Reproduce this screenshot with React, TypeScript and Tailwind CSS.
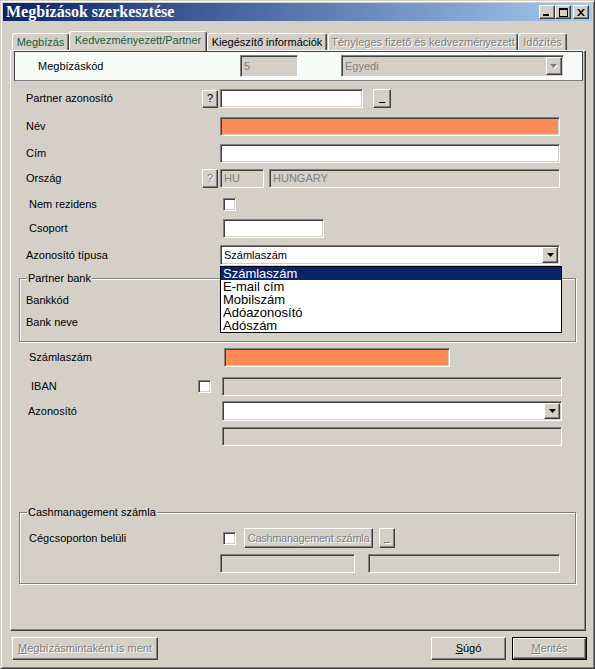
import React from "react";

const sunken =
  "border border-t-[#808080] border-l-[#808080] border-b-white border-r-white shadow-[inset_1px_1px_0_#404040,inset_-1px_-1px_0_#d4d0c8]";
const raised =
  "border border-t-white border-l-white border-b-[#404040] border-r-[#404040] shadow-[inset_-1px_-1px_0_#808080] bg-[#d4d0c8]";
const dim = "text-[#808080] [text-shadow:1px_1px_0_#fff]";

type Tone = "white" | "orange" | "gray";

function Input({ className = "", tone = "white", children }: { className?: string; tone?: Tone; children?: React.ReactNode }) {
  const bg = tone === "orange" ? "bg-[#ff8c55]" : tone === "gray" ? "bg-[#d4d0c8] text-[#808080]" : "bg-white";
  return (
    <div className={`${sunken} ${bg} h-[19px] flex items-center pl-[3px] overflow-hidden whitespace-nowrap ${className}`}>
      {children}
    </div>
  );
}

function Arrow({ disabled }: { disabled?: boolean }) {
  if (disabled) {
    return (
      <svg width="8" height="5" viewBox="0 0 8 5">
        <path d="M1 1h7l-3.5 4z" fill="#fff" />
        <path d="M0 0h7l-3.5 4z" fill="#808080" />
      </svg>
    );
  }
  return (
    <svg width="7" height="4" viewBox="0 0 7 4">
      <path d="M0 0h7l-3.5 4z" fill="#000" />
    </svg>
  );
}

function Combo({ className = "", value, disabled }: { className?: string; value?: string; disabled?: boolean }) {
  return (
    <div className={`${sunken} ${disabled ? "bg-[#d4d0c8]" : "bg-white"} flex items-stretch pl-[3px] ${className}`}>
      <span className={`flex-1 flex items-center whitespace-nowrap ${disabled ? "text-[#808080]" : ""}`}>{value}</span>
      <div className={`${raised} w-[16px] m-[1px] flex items-center justify-center`}>
        <Arrow disabled={disabled} />
      </div>
    </div>
  );
}

function Check({ className = "" }: { className?: string }) {
  return <div className={`${sunken} bg-white w-[13px] h-[13px] shrink-0 ${className}`} />;
}

function SmallBtn({ className = "", disabled, children }: { className?: string; disabled?: boolean; children?: React.ReactNode }) {
  return (
    <div className={`${raised} shrink-0 flex items-center justify-center whitespace-nowrap ${disabled ? dim : ""} ${className}`}>
      {children}
    </div>
  );
}

function Dots({ disabled }: { disabled?: boolean }) {
  return (
    <div className={`w-[6px] h-[1px] mt-[8px] ${disabled ? "bg-[#808080] shadow-[1px_1px_0_#fff]" : "bg-black"}`} />
  );
}

function Group({ title, className = "", children }: { title: string; className?: string; children?: React.ReactNode }) {
  return (
    <div className={`relative border border-[#808080] shadow-[1px_1px_0_#fff,inset_1px_1px_0_#fff] ${className}`}>
      <span className="absolute left-[7px] -top-[7px] bg-[#d4d0c8] px-[1px] leading-[13px]">{title}</span>
      {children}
    </div>
  );
}

function TitleBar() {
  return (
    <div className="h-[18px] flex items-center pl-[3px] pr-[3px] bg-[linear-gradient(to_right,#0a246a,#a6caf0)]">
      <span className="flex-1 text-white font-bold text-[16px] leading-[18px] font-['Liberation_Serif','Times_New_Roman',serif]">
        Megbízások szerkesztése
      </span>
      <div className={`${raised} w-[16px] h-[14px] flex items-end justify-start pl-[3px] pb-[2px]`}>
        <div className="w-[6px] h-[2px] bg-black" />
      </div>
      <div className={`${raised} w-[16px] h-[14px] flex items-center justify-center`}>
        <div className="w-[9px] h-[9px] border border-black border-t-2" />
      </div>
      <div className={`${raised} w-[16px] h-[14px] ml-[2px] flex items-center justify-center`}>
        <svg width="8" height="7" viewBox="0 0 8 7">
          <path d="M0 0h2l2 2.3L6 0h2L5 3.5 8 7H6L4 4.7 2 7H0l3-3.5z" fill="#000" />
        </svg>
      </div>
    </div>
  );
}

function Tab({ label, className = "", active, tone }: { label: string; className?: string; active?: boolean; tone: "green" | "black" | "dim" }) {
  const color = tone === "green" ? "text-[#17603f]" : tone === "dim" ? dim : "text-black";
  return (
    <div
      className={`flex items-center justify-center whitespace-nowrap rounded-t-[3px] border-t border-l border-t-white border-l-white border-r border-r-[#404040] shadow-[inset_-1px_0_0_#808080] bg-[#d4d0c8] ${
        active ? "h-[20px] -mb-px relative z-10 pb-[2px]" : "h-[17px]"
      } ${color} ${className}`}
    >
      {label}
    </div>
  );
}

function Tabs() {
  return (
    <div className="flex items-end h-[19px] pl-[2px]">
      <Tab label="Megbízás" tone="green" className="w-[57px]" />
      <Tab label="Kedvezményezett/Partner" tone="green" active className="w-[138px]" />
      <Tab label="Kiegészítő információk" tone="black" className="w-[120px]" />
      <Tab label="Tényleges fizető és kedvezményezett" tone="dim" className="w-[190px] ml-[1px]" />
      <Tab label="Időzítés" tone="dim" className="w-[49px]" />
    </div>
  );
}

const dropdownItems = ["Számlaszám", "E-mail cím", "Mobilszám", "Adóazonosító", "Adószám"];

function TabPage() {
  return (
    <div className="h-[581px] border-t border-l border-t-white border-l-white border-r border-b border-r-[#404040] border-b-[#404040] shadow-[inset_-1px_-1px_0_#808080] flex flex-col">
      {/* top panel */}
      <div className="ml-[3px] w-[569px] h-[30px] shrink-0 bg-[#f8fcf8] border border-[#404040] border-b-[#808080] flex items-center pl-[23px]">
        <span className="w-[202px]">Megbízáskód</span>
        <Input tone="gray" className="w-[58px] h-[22px]">5</Input>
        <Combo disabled value="Egyedi" className="w-[223px] h-[22px] ml-[43px]" />
      </div>

      <div className="flex items-center h-[19px] mt-[8px]">
        <span className="ml-[15px] w-[176px]">Partner azonosító</span>
        <SmallBtn className="w-[16px] h-[18px]">?</SmallBtn>
        <Input className="w-[143px] ml-[2px]" />
        <SmallBtn className="w-[18px] h-[19px] ml-[10px]">
          <Dots />
        </SmallBtn>
      </div>

      <div className="flex items-center h-[19px] mt-[9px]">
        <span className="ml-[15px] w-[194px]">Név</span>
        <Input tone="orange" className="w-[340px]" />
      </div>

      <div className="flex items-center h-[19px] mt-[8px]">
        <span className="ml-[15px] w-[194px]">Cím</span>
        <Input className="w-[340px]" />
      </div>

      <div className="flex items-center h-[19px] mt-[6px]">
        <span className="ml-[15px] w-[176px]">Ország</span>
        <SmallBtn disabled className="w-[16px] h-[19px]">?</SmallBtn>
        <Input tone="gray" className="w-[44px] ml-[2px]">HU</Input>
        <Input tone="gray" className="w-[291px] ml-[5px]">HUNGARY</Input>
      </div>

      <div className="flex items-center h-[13px] mt-[10px]">
        <span className="ml-[18px] w-[194px]">Nem rezidens</span>
        <Check />
      </div>

      <div className="flex items-center h-[19px] mt-[8px]">
        <span className="ml-[18px] w-[194px]">Csoport</span>
        <Input className="w-[101px]" />
      </div>

      <div className="flex items-center h-[20px] mt-[7px] relative z-20">
        <span className="ml-[15px] w-[194px]">Azonosító típusa</span>
        <div className="relative">
          <Combo value="Számlaszám" className="w-[340px] h-[20px]" />
          <div className="absolute left-0 top-[21px] w-[342px] bg-white border border-black text-[13px] leading-[13px]">
            {dropdownItems.map((item, i) => (
              <div key={item} className={`h-[13px] pl-[2px] whitespace-nowrap ${i === 0 ? "bg-[#0a246a] text-white" : ""}`}>
                {item}
              </div>
            ))}
          </div>
        </div>
      </div>

      <Group title="Partner bank" className="ml-[8px] w-[557px] h-[64px] mt-[13px] shrink-0">
        <div className="w-fit h-[14px] mt-[14px] ml-[6px] flex items-center">Bankkód</div>
        <div className="w-fit h-[14px] mt-[8px] ml-[6px] flex items-center">Bank neve</div>
      </Group>

      <div className="flex items-center h-[19px] mt-[6px]">
        <span className="ml-[18px] w-[195px]">Számlaszám</span>
        <Input tone="orange" className="w-[226px]" />
      </div>

      <div className="flex items-center h-[19px] mt-[10px]">
        <span className="ml-[20px] w-[167px]">IBAN</span>
        <Check />
        <Input tone="gray" className="w-[340px] ml-[11px]" />
      </div>

      <div className="flex items-center h-[20px] mt-[5px]">
        <span className="ml-[17px] w-[194px]">Azonosító</span>
        <Combo className="w-[340px] h-[20px]" />
      </div>

      <div className="flex items-center h-[19px] mt-[6px]">
        <Input tone="gray" className="w-[340px] ml-[211px]" />
      </div>

      <Group title="Cashmanagement számla" className="ml-[8px] w-[557px] h-[72px] mt-[66px] shrink-0">
        <div className="flex items-center h-[20px] mt-[15px]">
          <span className="ml-[9px] w-[194px]">Cégcsoporton belüli</span>
          <Check />
          <SmallBtn disabled className="w-[129px] h-[20px] ml-[8px] overflow-hidden tracking-[-0.3px]">
            Cashmanagement számla
          </SmallBtn>
          <SmallBtn disabled className="w-[16px] h-[20px] ml-[6px]">
            <Dots disabled />
          </SmallBtn>
        </div>
        <div className="flex items-center h-[19px] mt-[6px]">
          <Input tone="gray" className="w-[135px] ml-[200px]" />
          <Input tone="gray" className="w-[192px] ml-[13px]" />
        </div>
      </Group>
    </div>
  );
}

function Buttons() {
  return (
    <div className="flex h-[23px] mt-[6px]">
      <div className={`${raised} ${dim} ml-[9px] w-[146px] flex items-center justify-center whitespace-nowrap`}>
        <span>
          <span className="underline">M</span>egbízásmintaként is ment
        </span>
      </div>
      <div className={`${raised} ml-[273px] w-[75px] flex items-center justify-center`}>
        <span>
          <span className="underline">S</span>úgó
        </span>
      </div>
      <div className="ml-[6px] w-[75px] border border-black flex">
        <div className={`${raised} ${dim} flex-1 flex items-center justify-center`}>
          <span>
            <span className="underline">M</span>entés
          </span>
        </div>
      </div>
    </div>
  );
}

export default function App() {
  return (
    <div className="w-[595px] h-[669px] bg-[#d4d0c8] border border-t-[#d4d0c8] border-l-[#d4d0c8] border-r-[#404040] border-b-[#404040] shadow-[inset_1px_1px_0_#fff,inset_-1px_-1px_0_#808080] p-[2px] flex flex-col font-['Liberation_Sans',Arial,sans-serif] text-[11px] leading-[13px] text-black select-none overflow-hidden">
      <TitleBar />
      <div className="mt-[10px] ml-[7px] w-[576px]">
        <Tabs />
        <TabPage />
      </div>
      <Buttons />
    </div>
  );
}
